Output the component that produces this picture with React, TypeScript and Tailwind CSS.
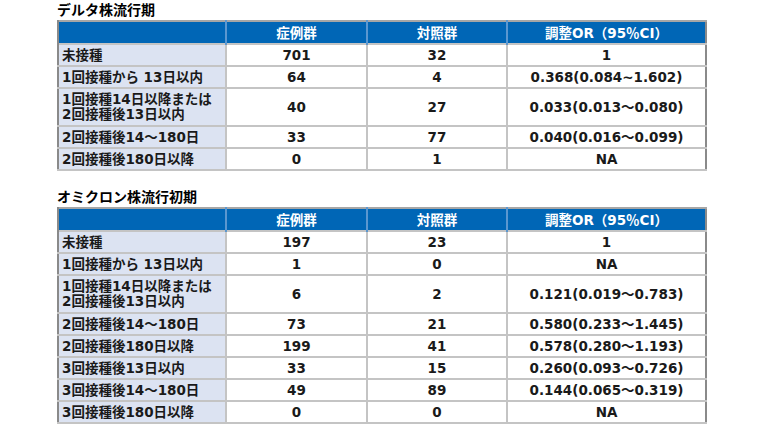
const font = { fontFamily: '"DejaVu Sans", "Noto Sans CJK JP", sans-serif' }

type Row = { label: string[]; cases: string; ctrl: string; or: string }

const delta: Row[] = [
  { label: ["未接種"], cases: "701", ctrl: "32", or: "1" },
  { label: ["1回接種から 13日以内"], cases: "64", ctrl: "4", or: "0.368(0.084~1.602)" },
  { label: ["1回接種14日以降または", "2回接種後13日以内"], cases: "40", ctrl: "27", or: "0.033(0.013〜0.080)" },
  { label: ["2回接種後14〜180日"], cases: "33", ctrl: "77", or: "0.040(0.016〜0.099)" },
  { label: ["2回接種後180日以降"], cases: "0", ctrl: "1", or: "NA" },
]

const omicron: Row[] = [
  { label: ["未接種"], cases: "197", ctrl: "23", or: "1" },
  { label: ["1回接種から 13日以内"], cases: "1", ctrl: "0", or: "NA" },
  { label: ["1回接種14日以降または", "2回接種後13日以内"], cases: "6", ctrl: "2", or: "0.121(0.019〜0.783)" },
  { label: ["2回接種後14〜180日"], cases: "73", ctrl: "21", or: "0.580(0.233〜1.445)" },
  { label: ["2回接種後180日以降"], cases: "199", ctrl: "41", or: "0.578(0.280〜1.193)" },
  { label: ["3回接種後13日以内"], cases: "33", ctrl: "15", or: "0.260(0.093〜0.726)" },
  { label: ["3回接種後14〜180日"], cases: "49", ctrl: "89", or: "0.144(0.065〜0.319)" },
  { label: ["3回接種後180日以降"], cases: "0", ctrl: "0", or: "NA" },
]

function Table({ rows }: { rows: Row[] }) {
  return (
    <table className="border-collapse table-fixed w-[648px] text-[13.5px] leading-[18px] text-[#1a1a1a] border-l-2 border-r-2 border-l-[#8a8a8a] border-r-[#8a8a8a]">
      <colgroup>
        <col className="w-[168px]" />
        <col className="w-[141px]" />
        <col className="w-[140px]" />
        <col className="w-[199px]" />
      </colgroup>
      <thead>
        <tr className="h-[23px] bg-[#0066b6] text-white border-t-2 border-t-[#a6a6a6]">
          <th className="border-l-2 border-l-[#8a8a8a]"></th>
          <th className="border-l-2 border-l-[#5b97d0] font-bold">症例群</th>
          <th className="border-l-2 border-l-[#5b97d0] font-bold">対照群</th>
          <th className="border-l-2 border-l-[#5b97d0] font-bold">調整OR（95％CI）</th>
        </tr>
      </thead>
      <tbody>
        {rows.map((r, i) => (
          <tr key={i} className={`${r.label.length > 1 ? "h-[38px]" : "h-[22px]"} border-t-2 border-t-[#c4c4c4] border-b-2 border-b-[#c4c4c4]`}>
            <td className="bg-[#dce3f2] pl-[3px] leading-[15px] font-semibold whitespace-nowrap">
              {r.label.map((l, j) => (
                <div key={j}>{l}</div>
              ))}
            </td>
            <td className="border-l-2 border-l-[#c4c4c4] text-center font-semibold">{r.cases}</td>
            <td className="border-l-2 border-l-[#c4c4c4] text-center font-semibold">{r.ctrl}</td>
            <td className="border-l-2 border-l-[#c4c4c4] text-center font-semibold">{r.or}</td>
          </tr>
        ))}
      </tbody>
    </table>
  )
}

export default function App() {
  return (
    <div className="w-[765px] h-[425px] bg-white overflow-hidden pl-[57px]" style={font}>
      <h2 className="text-[14px] font-bold leading-[20px] text-black">デルタ株流行期</h2>
      <Table rows={delta} />
      <h2 className="text-[14px] font-bold leading-[20px] text-black mt-[16px]">オミクロン株流行初期</h2>
      <Table rows={omicron} />
    </div>
  )
}
